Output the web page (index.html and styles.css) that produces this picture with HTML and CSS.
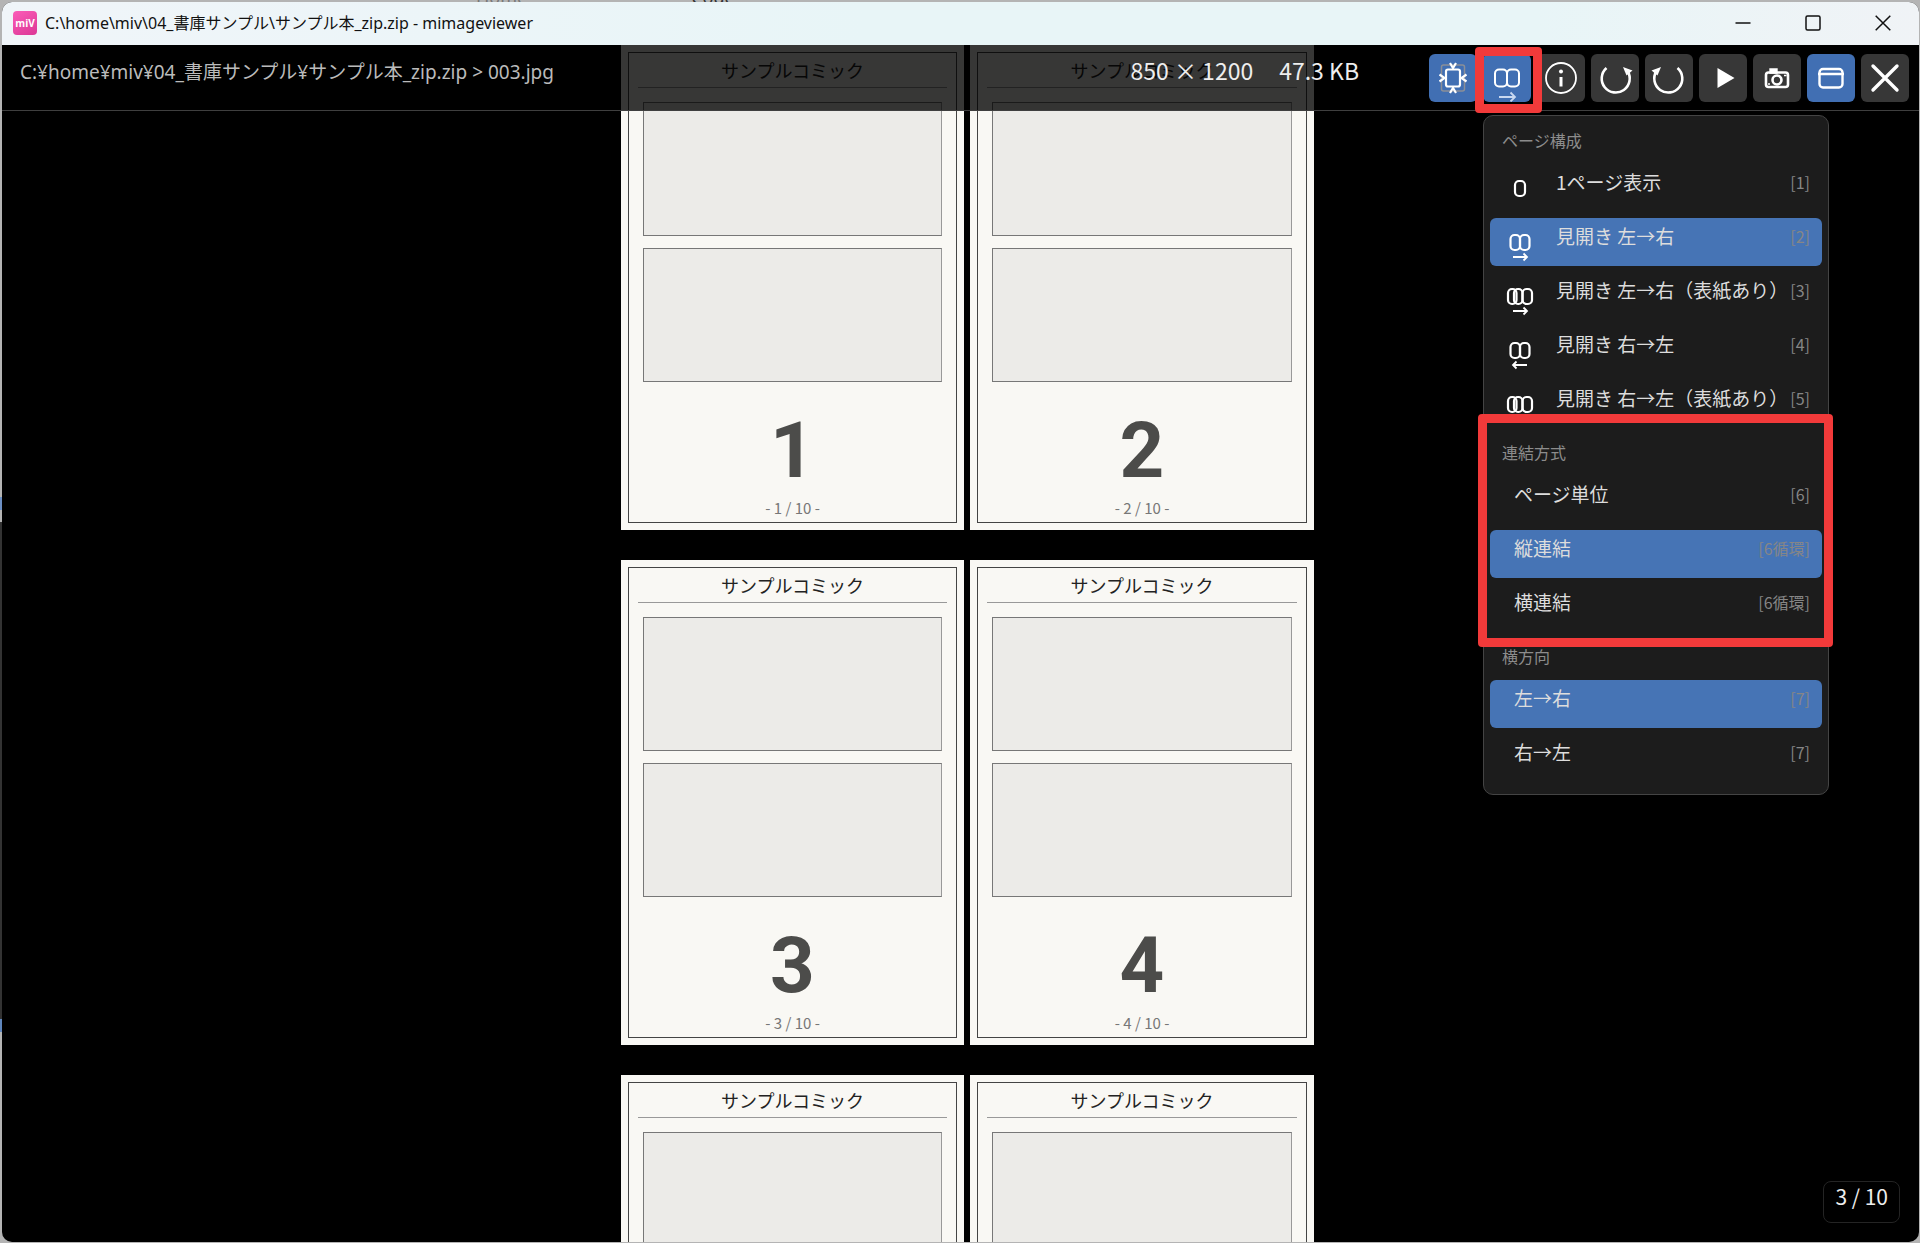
FILE: index.html
```
<!DOCTYPE html>
<html lang="ja">
<head>
<meta charset="utf-8">
<title>mimageviewer</title>
<link rel="stylesheet" href="styles.css">
</head>
<body>
<div class="backdrop"><span>Home</span><span class="dark">Code</span></div>
<div class="window">
  <header class="titlebar">
    <span class="app-icon">miV</span>
    <h1 class="window-title">C:\home\miv\04_書庫サンプル\サンプル本_zip.zip - mimageviewer</h1>
    <div class="window-controls">
      <button class="caption-button" aria-label="最小化"><svg width="16" height="16" viewBox="0 0 16 16"><path d="M.5 8h15"/></svg></button>
      <button class="caption-button" aria-label="最大化"><svg width="16" height="16" viewBox="0 0 16 16"><rect x="1" y="1" width="14" height="14" rx="1.5"/></svg></button>
      <button class="caption-button" aria-label="閉じる"><svg width="16" height="16" viewBox="0 0 16 16"><path d="M.7.7l14.6 14.6M15.3.7L.7 15.3"/></svg></button>
    </div>
  </header>
  <main class="stage">
    <div class="pages">
      <article class="page"><div class="frame"><h2 class="comic-title">サンプルコミック</h2><div class="panel"></div><div class="panel"></div><p class="number">1</p><p class="folio">- 1 / 10 -</p></div></article>
      <article class="page"><div class="frame"><h2 class="comic-title">サンプルコミック</h2><div class="panel"></div><div class="panel"></div><p class="number">2</p><p class="folio">- 2 / 10 -</p></div></article>
      <article class="page"><div class="frame"><h2 class="comic-title">サンプルコミック</h2><div class="panel"></div><div class="panel"></div><p class="number">3</p><p class="folio">- 3 / 10 -</p></div></article>
      <article class="page"><div class="frame"><h2 class="comic-title">サンプルコミック</h2><div class="panel"></div><div class="panel"></div><p class="number">4</p><p class="folio">- 4 / 10 -</p></div></article>
      <article class="page"><div class="frame"><h2 class="comic-title">サンプルコミック</h2><div class="panel"></div></div></article>
      <article class="page"><div class="frame"><h2 class="comic-title">サンプルコミック</h2><div class="panel"></div></div></article>
    </div>
    <div class="toolbar">
      <p class="path">C:¥home¥miv¥04_書庫サンプル¥サンプル本_zip.zip &gt; 003.jpg</p>
      <p class="meta"><span>850 × 1200</span><span>47.3 KB</span></p>
      <div class="tools">
        <button class="tool active" aria-label="画面に合わせる"><svg width="48" height="48" viewBox="0 0 48 48"><rect x="12.500" y="11" width="23" height="26" rx="2" stroke="#8a8f98" stroke-width="1.500"/><rect x="17" y="15.500" width="14" height="17" rx="2" stroke-width="2.200"/><path d="M21 9l3 5 3-5M21 39l3-5 3 5M10.500 20.500l5 3.500-5 3.500M37.500 20.500l-5 3.500 5 3.500" stroke-width="2.200"/></svg></button>
        <button class="tool active marked" aria-label="ページ構成"><svg width="48" height="48" viewBox="0 0 48 48"><rect x="12" y="15.500" width="12" height="17" rx="4" stroke-width="2"/><rect x="24" y="15.500" width="12" height="17" rx="4" stroke-width="2"/><path d="M16 43h16M27.500 38.500L32 43l-4.500 4.500" stroke="#c9d8f0" stroke-width="1.800"/></svg></button>
        <button class="tool" aria-label="情報"><svg width="48" height="48" viewBox="0 0 48 48"><circle cx="24" cy="24" r="15" stroke-width="1.800"/><circle cx="24" cy="17.500" r="2" fill="#fff" stroke="none"/><path d="M24 23v9.500" stroke-width="3"/></svg></button>
        <button class="tool" aria-label="右に回転"><svg width="48" height="48" viewBox="0 0 48 48"><path d="M15.500 14a14 14 0 1 0 21 3" stroke-width="2.600"/><path d="M32 13l9.500 3.500-6 5z" fill="#fff" stroke="none"/></svg></button>
        <button class="tool" aria-label="左に回転"><svg width="48" height="48" viewBox="0 0 48 48"><path d="M32.500 14a14 14 0 1 1-21 3" stroke-width="2.600"/><path d="M16 13l-9.500 3.500 6 5z" fill="#fff" stroke="none"/></svg></button>
        <button class="tool" aria-label="再生"><svg width="48" height="48" viewBox="0 0 48 48"><path d="M18.500 14l17 10-17 10z" fill="#fff" stroke="none"/></svg></button>
        <button class="tool" aria-label="撮影"><svg width="48" height="48" viewBox="0 0 48 48"><rect x="13" y="18.500" width="22" height="14.500" rx="2.500" stroke-width="2.600"/><path d="M17.500 15.500h6v3h-6z" fill="#fff" stroke-width="2.400"/><circle cx="24" cy="26" r="4.500" stroke-width="2.600"/><path d="M31 21.500h2.500M15 30h2" stroke-width="1.600"/></svg></button>
        <button class="tool active" aria-label="ウィンドウ表示"><svg width="48" height="48" viewBox="0 0 48 48"><rect x="12.500" y="15" width="23" height="18.500" rx="3.500" stroke-width="2.400"/><path d="M11 20h26" stroke-width="2.600"/></svg></button>
        <button class="tool" aria-label="閉じる"><svg width="48" height="48" viewBox="0 0 48 48"><path d="M12 12l24 24M36 12L12 36" stroke-width="3.400" stroke-linecap="round"/></svg></button>
      </div>
    </div>
    <div class="menu">
      <h3 class="menu-heading">ページ構成</h3>
      <button class="item"><svg class="layout-icon" width="32" height="36" viewBox="0 0 32 36"><rect x="11" y="8" width="10" height="15" rx="4"/></svg><span class="name">1ページ表示</span><kbd>[1]</kbd></button>
      <button class="item active"><svg class="layout-icon" width="32" height="36" viewBox="0 0 32 36"><rect x="6.500" y="8" width="9.500" height="15" rx="4"/><rect x="16" y="8" width="9.500" height="15" rx="4"/><path class="arrow" d="M9 30h14M19.500 26.500L23 30l-3.500 3.500"/></svg><span class="name">見開き 左→右</span><kbd>[2]</kbd></button>
      <button class="item"><svg class="layout-icon" width="32" height="36" viewBox="0 0 32 36"><rect x="4" y="8" width="8.500" height="15" rx="4"/><rect x="10" y="8" width="8.500" height="15" rx="4"/><rect x="18.500" y="8" width="9.500" height="15" rx="4"/><path class="arrow" d="M9 30h14M19.500 26.500L23 30l-3.500 3.500"/></svg><span class="name">見開き 左→右（表紙あり）</span><kbd>[3]</kbd></button>
      <button class="item"><svg class="layout-icon" width="32" height="36" viewBox="0 0 32 36"><rect x="6.500" y="8" width="9.500" height="15" rx="4"/><rect x="16" y="8" width="9.500" height="15" rx="4"/><path class="arrow" d="M23 30H9M12.500 26.500L9 30l3.500 3.500"/></svg><span class="name">見開き 右→左</span><kbd>[4]</kbd></button>
      <button class="item"><svg class="layout-icon" width="32" height="36" viewBox="0 0 32 36"><rect x="4" y="8" width="8.500" height="15" rx="4"/><rect x="10" y="8" width="8.500" height="15" rx="4"/><rect x="18.500" y="8" width="9.500" height="15" rx="4"/></svg><span class="name">見開き 右→左（表紙あり）</span><kbd>[5]</kbd></button>
      <section class="group marked">
        <h3 class="menu-heading">連結方式</h3>
        <button class="item"><span class="name">ページ単位</span><kbd>[6]</kbd></button>
        <button class="item active"><span class="name">縦連結</span><kbd>[6循環]</kbd></button>
        <button class="item"><span class="name">横連結</span><kbd>[6循環]</kbd></button>
      </section>
      <h3 class="menu-heading">横方向</h3>
      <button class="item active"><span class="name">左→右</span><kbd>[7]</kbd></button>
      <button class="item"><span class="name">右→左</span><kbd>[7]</kbd></button>
    </div>
    <p class="counter">3 / 10</p>
  </main>
</div>
</body>
</html>
```
FILE: styles.css
```
* { box-sizing: border-box; }
body, h1, h2, h3, p { margin: 0; font-weight: 400; }
body {
  min-height: 100vh;
  padding: 2px 1px 1px 2px;
  display: flex;
  background: linear-gradient(#b4b4b4 40%, #6c8fc4 40% 41%, #b4b4b4 41% 42%, #333 42% 82%, #5f86bd 82% 83%, #b4b4b4 83%) left / 3px 100% no-repeat, #b4b4b4;
  font-family: "Noto Sans CJK JP", sans-serif;
}
button { border: 0; padding: 0; font: inherit; color: inherit; background: none; }
svg { display: block; fill: none; }

/* sliver of the window behind, above the title bar */
.backdrop {
  position: absolute;
  inset: 0 0 auto;
  height: 2px;
  overflow: hidden;
  display: flex;
  align-items: flex-end;
  gap: 164px;
  padding-left: 476px;
  font: 18px/18px "Noto Sans", sans-serif;
  color: #777;
}
.backdrop span { margin-bottom: -4px; }
.backdrop .dark { color: #333; }

.window {
  position: relative;
  flex: 1;
  height: calc(100vh - 3px);
  display: flex;
  flex-direction: column;
  border-radius: 10px;
  overflow: hidden;
  background: #000;
}
.titlebar {
  height: 43px;
  flex: none;
  display: flex;
  align-items: center;
  padding: 0 0 2px 11px;
  background: linear-gradient(90deg, #f0f5f9, #e8f5f7 45%, #e8f5f7 80%, #f0f3f6);
}
.app-icon {
  width: 24px;
  height: 24px;
  margin: 0 8px 0 0;
  border-radius: 4px;
  background: linear-gradient(150deg, #fb5cb8, #dc3795);
  color: #fff;
  font: 700 10px/24px "Open Sans", sans-serif;
  text-align: center;
}
.window-title { flex: 1; font: 16px/24px "Noto Sans", "Noto Sans CJK JP", sans-serif; color: #111; white-space: nowrap; }
.window-controls { display: flex; height: 100%; margin-right: 1px; }
.caption-button { width: 70px; display: grid; place-items: center; stroke: #111; stroke-width: 1.500; }

.stage { flex: 1; min-height: 0; position: relative; overflow: hidden; }
.pages {
  display: grid;
  grid-template-columns: 343px 344px;
  justify-content: center;
  gap: 30px 6px;
  margin-left: 14px;
}
.page { height: 485px; padding: 7px; background: #f9f8f4; }
.frame { height: 100%; padding: 0 9px; border: 1px solid #444; text-align: center; }
.comic-title {
  height: 35px;
  border-bottom: 1px solid #999;
  font-size: 18px;
  line-height: 34px;
  color: #222;
}
.panel { height: 134px; margin: 14px 5px -2px; border: 1px solid #777; border-color: #777 #999 #777 #777; background: #ecebe8; }
.number { margin-top: 31px; font: 700 78px/80px Roboto, sans-serif; color: #4c4c4a; }
.folio { margin-top: 5px; font-size: 15px; line-height: 24px; color: #777; }

.toolbar {
  position: absolute;
  inset: 0 0 auto;
  height: 66px;
  display: flex;
  align-items: center;
  gap: 16px;
  padding: 0 10px 0 18px;
  border-bottom: 1px solid #3f3f3f;
  background: rgba(0, 0, 0, .78);
}
.path { flex: 1; font: 19px/24px "Noto Sans", "Noto Sans CJK JP", sans-serif; padding-bottom: 12px; color: #bbb; white-space: nowrap; }
.meta { display: flex; gap: 26px; padding-bottom: 15px; margin-right: 54px; font-size: 23px; line-height: 24px; color: #eee; white-space: nowrap; }
.tools { display: flex; gap: 6px; }
.tool { width: 48px; height: 48px; border-radius: 6px; background: #373737; stroke: #fff; }
.tool.active { background: #416fb3; }
.marked { position: relative; }
.marked::after { content: ""; position: absolute; border: 9px solid #f23a3a; border-radius: 4px; pointer-events: none; }
.tool.marked::after { inset: -7px -11px -11px -8px; }
.group.marked::after { inset: -14px -11px -15px -12px; }

.menu {
  position: absolute;
  top: 70px;
  right: 90px;
  width: 346px;
  padding: 0 6px 12px;
  border: 1px solid #444;
  border-radius: 10px;
  background: #1c1c1c;
}
.menu-heading { height: 48px; padding: 0 12px; font-size: 16px; line-height: 48px; color: #8c8c8c; }
.item {
  width: 100%;
  height: 48px;
  display: flex;
  padding: 6px 12px 0 24px;
  border-radius: 6px;
  font-size: 19px;
  line-height: 24px;
  color: #ddd;
  text-align: left;
  white-space: nowrap;
}
.item + .item { margin-top: 6px; }
.item.active { background: #4674b5; }
.name { flex: 1; }
.item kbd { font: 16px/24px "Noto Sans CJK JP", sans-serif; color: #868686; }
.layout-icon { flex: none; margin: 3px 20px 0 -10px; stroke: #fff; stroke-width: 2.200; }
.arrow { stroke-width: 1.800; }
.counter {
  position: absolute;
  right: 19px;
  bottom: 19px;
  height: 42px;
  padding: 2px 11px;
  border: 1px solid #242424;
  border-radius: 8px;
  font-size: 21px;
  line-height: 24px;
  color: #eee;
}
```
